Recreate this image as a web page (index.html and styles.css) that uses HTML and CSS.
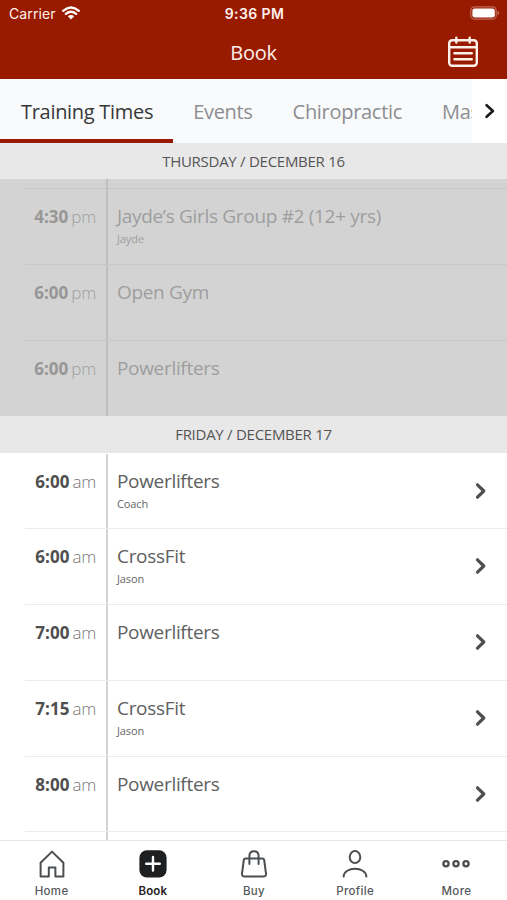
FILE: index.html
```
<!DOCTYPE html>
<html lang="en">

<head>
  <meta charset="utf-8" />
  <title>Book</title>
  <link rel="stylesheet" href="styles.css">
</head>

<body>
  <header class="header">
    <div class="status">
      <div class="carrier">
        <span>Carrier</span>
        <svg class="wifi" width="18" height="14" viewBox="0 0 18 14">
          <path d="M1.2 4.8 Q9 -1.9 16.8 4.8 M3.9 7.9 Q9 3.7 14.1 7.9" />
          <path class="dot" d="M5.8 10.2 Q9 7.6 12.2 10.2 L9 13.5 Z" />
        </svg>
      </div>
      <div class="clock">9:36 PM</div>
      <div class="battery">
        <svg width="30" height="14" viewBox="0 0 30 14">
          <rect class="shell" x="0.8" y="0.8" width="25.4" height="12.4" rx="3.8" />
          <rect class="charge" x="2.4" y="2.4" width="22.4" height="9.2" rx="2.4" />
          <path class="tip" d="M27.5 4.8 Q29.3 5.6 29.3 7 Q29.3 8.4 27.5 9.2 Z" />
        </svg>
      </div>
    </div>
    <div class="navbar">
      <h1>Book</h1>
      <svg class="calendar" width="32" height="32" viewBox="0 0 32 32">
        <rect x="2.2" y="4.2" width="27.6" height="25.6" rx="3" />
        <path d="M2.2 11.2 H29.8 M9.3 1.8 V6.5 M22.7 1.8 V6.5 M7.4 17.2 H24.8 M7.4 23.2 H24.8" />
      </svg>
    </div>
  </header>

  <nav class="tabs">
    <div class="tab-list">
      <a class="tab active">Training Times</a>
      <a class="tab">Events</a>
      <a class="tab">Chiropractic</a>
      <a class="tab">Massage</a>
    </div>
    <div class="tab-next">
      <svg width="12" height="18" viewBox="0 0 12 18"><path d="M2.6 3.2 L8.9 9 L2.6 14.8" /></svg>
    </div>
  </nav>

  <main class="schedule">
    <h2 class="day">THURSDAY / DECEMBER 16</h2>
    <ul class="classes past">
      <li class="row tail"><div class="time"></div><div class="info"></div></li>
      <li class="row">
        <div class="time"><b>4:30</b><span>pm</span></div>
        <div class="info"><p class="name">Jayde’s Girls Group #2 (12+ yrs)</p><p class="coach">Jayde</p></div>
      </li>
      <li class="row">
        <div class="time"><b>6:00</b><span>pm</span></div>
        <div class="info"><p class="name">Open Gym</p></div>
      </li>
      <li class="row">
        <div class="time"><b>6:00</b><span>pm</span></div>
        <div class="info"><p class="name">Powerlifters</p></div>
      </li>
    </ul>

    <h2 class="day">FRIDAY / DECEMBER 17</h2>
    <ul class="classes">
      <li class="row">
        <div class="time"><b>6:00</b><span>am</span></div>
        <div class="info"><p class="name">Powerlifters</p><p class="coach">Coach</p></div>
        <svg class="chevron" width="12" height="18" viewBox="0 0 12 18"><path d="M2.5 2.8 L8.8 9 L2.5 15.2" /></svg>
      </li>
      <li class="row">
        <div class="time"><b>6:00</b><span>am</span></div>
        <div class="info"><p class="name">CrossFit</p><p class="coach">Jason</p></div>
        <svg class="chevron" width="12" height="18" viewBox="0 0 12 18"><path d="M2.5 2.8 L8.8 9 L2.5 15.2" /></svg>
      </li>
      <li class="row">
        <div class="time"><b>7:00</b><span>am</span></div>
        <div class="info"><p class="name">Powerlifters</p></div>
        <svg class="chevron" width="12" height="18" viewBox="0 0 12 18"><path d="M2.5 2.8 L8.8 9 L2.5 15.2" /></svg>
      </li>
      <li class="row">
        <div class="time"><b>7:15</b><span>am</span></div>
        <div class="info"><p class="name">CrossFit</p><p class="coach">Jason</p></div>
        <svg class="chevron" width="12" height="18" viewBox="0 0 12 18"><path d="M2.5 2.8 L8.8 9 L2.5 15.2" /></svg>
      </li>
      <li class="row">
        <div class="time"><b>8:00</b><span>am</span></div>
        <div class="info"><p class="name">Powerlifters</p></div>
        <svg class="chevron" width="12" height="18" viewBox="0 0 12 18"><path d="M2.5 2.8 L8.8 9 L2.5 15.2" /></svg>
      </li>
      <li class="row tail"><div class="time"></div><div class="info"></div></li>
    </ul>
  </main>

  <footer class="bottom-nav">
    <a class="item">
      <svg width="30" height="30" viewBox="0 0 30 30">
        <path d="M3.6 27.6 V13.8 L15 2.6 L26.4 13.8 V27.6 H18.4 V18.4 H11.8 V27.6 Z" />
      </svg>
      <span>Home</span>
    </a>
    <a class="item current">
      <svg width="30" height="30" viewBox="0 0 30 30">
        <rect class="tile" x="1.4" y="1.2" width="27.2" height="27.2" rx="7.5" />
        <path class="plus" d="M15 8 V21.6 M8.2 14.8 H21.8" />
      </svg>
      <span>Book</span>
    </a>
    <a class="item">
      <svg width="30" height="30" viewBox="0 0 30 30">
        <path d="M6.6 9.5 H23.4 Q25 9.5 25.2 11 L27 24.6 Q27.2 27.6 24.2 27.6 H5.8 Q2.8 27.6 3 24.6 L4.8 11 Q5 9.5 6.6 9.5 Z M10.4 15 V6.8 Q10.4 2.2 15 2.2 Q19.6 2.2 19.6 6.8 V15" />
      </svg>
      <span>Buy</span>
    </a>
    <a class="item">
      <svg width="30" height="30" viewBox="0 0 30 30">
        <ellipse cx="15" cy="8.1" rx="5.3" ry="6" />
        <path d="M3.6 27.6 C4 17.2 26 17.2 26.4 27.6" />
      </svg>
      <span>Profile</span>
    </a>
    <a class="item">
      <svg class="dots" width="30" height="30" viewBox="0 0 30 30">
        <circle cx="5" cy="14.8" r="2.6" />
        <circle cx="15" cy="14.8" r="2.6" />
        <circle cx="25" cy="14.8" r="2.6" />
      </svg>
      <span>More</span>
    </a>
  </footer>
</body>

</html>
```
FILE: styles.css
```
/*
  site colors:
    red           #981b00
    dark text     #4f4f4f
    day bar       #e8e8e8
    past classes  #d3d3d3
 */
* {
  box-sizing: border-box;
}

body {
  display: flex;
  flex-direction: column;
  width: 507px;
  height: 900px;
  margin: 0;
  overflow: hidden;
  background-color: #fff;
  color: #4f4f4f;
  font-family: "Open Sans", "Noto Sans", sans-serif;
}

h1, h2, p, ul {
  margin: 0;
  padding: 0;
  font-weight: normal;
}

svg {
  display: block;
  fill: none;
  stroke-linecap: round;
  stroke-linejoin: round;
}

.header {
  flex: none;
  height: 79px;
  background-color: #981b00;
  color: #fff0eb;
}

.status {
  display: grid;
  grid-template-columns: 1fr auto 1fr;
  align-items: center;
  height: 27px;
  padding: 0 7px 0 9px;
  font-family: Inter, sans-serif;
  font-size: 14px;
}

.carrier {
  display: flex;
  align-items: center;
  gap: 6px;
  letter-spacing: 0.1px;
}

.wifi {
  margin-top: -2px;
  stroke: #fff;
  stroke-width: 2.3;
}

.wifi .dot {
  fill: #fff;
  stroke: none;
}

.clock {
  font-weight: 600;
  letter-spacing: 0.4px;
}

.battery {
  justify-self: end;
  margin-top: -1px;
}

.shell {
  stroke: #c06a59;
  stroke-width: 1.2;
}

.charge {
  fill: #fff;
}

.tip {
  fill: #c06a59;
}

.navbar {
  display: grid;
  grid-template-columns: 1fr auto 1fr;
  align-items: center;
  height: 50px;
  padding-right: 28px;
  padding-left: 28px;
}

.navbar h1 {
  grid-column: 2;
  font-size: 20px;
  letter-spacing: -0.3px;
}

.calendar {
  justify-self: end;
  stroke: #fff0eb;
  stroke-width: 2.4;
}

.tabs {
  display: flex;
  flex: none;
  height: 64px;
  background-color: #f8fafb;
}

.tab-list {
  display: flex;
  flex: 1;
  min-width: 0;
  overflow: hidden;
}

.tab {
  flex: none;
  padding: 0 20px;
  color: #8d8e91;
  font-size: 20px;
  line-height: 65px;
  letter-spacing: -0.3px;
}

.tab.active {
  padding-left: 21px;
  border-bottom: 4px solid #981b00;
  color: #36383a;
}

.tab-next {
  display: flex;
  align-items: center;
  justify-content: center;
  width: 35px;
  background-color: #fff;
}

.tab-next svg {
  stroke: #1c1c1e;
  stroke-width: 2.7;
}

.schedule {
  flex: 1;
  min-height: 0;
  overflow: hidden;
}

.day {
  height: 37px;
  background-color: #e8e8e8;
  color: #555;
  font-size: 15px;
  line-height: 36px;
  letter-spacing: -0.27px;
  text-align: center;
}

.day:first-child {
  height: 36px;
}

.classes {
  padding-top: 0.5px;
  list-style: none;
}

.row {
  display: flex;
  height: 75.75px;
  margin-left: 25px;
  border-bottom: 1px solid #ebebeb;
}

.row.tail {
  height: 9.75px;
}

.time {
  width: 83px;
  padding: 16px 10px 0 0;
  border-right: 2px solid #d4d4d4;
  font-size: 17px;
  line-height: 23px;
  text-align: right;
  white-space: nowrap;
}

.time b {
  font-weight: 700;
}

.time span {
  margin-left: 3px;
  color: #777;
  font-weight: 300;
  letter-spacing: -0.2px;
}

.info {
  flex: 1;
  padding: 15px 0 0 9px;
}

.name {
  color: #606060;
  font-size: 19px;
  line-height: 25px;
  letter-spacing: -0.32px;
}

.coach {
  margin-top: 2px;
  color: #666;
  font-size: 11px;
  line-height: 15px;
  letter-spacing: -0.1px;
}

.chevron {
  margin: 28px 20px 0 0;
  stroke: #4f4f4f;
  stroke-width: 3.2;
}

.past {
  padding-top: 0;
  background-color: #d3d3d3;
}

.past .row {
  border-color: #c8c8c8;
}

.past .row.tail {
  height: 10.25px;
}

.past .row:last-child {
  height: 75.25px;
  border-bottom: none;
}

.past .time {
  border-color: #bfbfbf;
  color: #979797;
}

.past .time span,
.past .name,
.past .coach {
  color: #9e9e9e;
}

.bottom-nav {
  display: flex;
  flex: none;
  height: 60px;
  padding-left: 1px;
  border-top: 1px solid #e6e6e6;
  background-color: #fff;
}

.item {
  display: flex;
  flex: 1;
  flex-direction: column;
  align-items: center;
  padding-top: 8px;
  color: #55585b;
  font-family: Inter, sans-serif;
  font-size: 11.5px;
  font-weight: 500;
  line-height: 14px;
  letter-spacing: 0.35px;
}

.item svg {
  margin-bottom: 5px;
  stroke: #4b4e51;
  stroke-width: 2;
}

.item .dots {
  stroke-width: 2.3;
}

.item.current {
  color: #1f2123;
  font-weight: 600;
  letter-spacing: 0.1px;
}

.item .tile {
  fill: #1d1f21;
  stroke: none;
}

.item .plus {
  stroke: #fff;
  stroke-width: 2.4;
}
```
